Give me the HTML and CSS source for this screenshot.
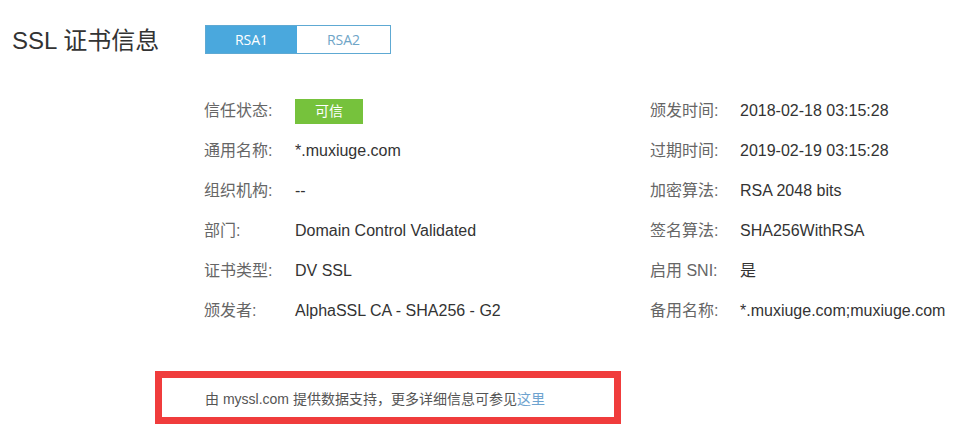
FILE: index.html
```html
<!DOCTYPE html>
<html lang="zh">
<head>
<meta charset="utf-8">
<title>SSL 证书信息</title>
<link rel="stylesheet" href="styles.css">
</head>
<body>
<div class="page">
  <div class="header">
    <h2 class="title">SSL 证书信息</h2>
    <div class="tabs">
      <span class="tab active">RSA1</span>
      <span class="tab">RSA2</span>
    </div>
  </div>
  <div class="info">
    <div class="item"><span class="label">信任状态:</span><span class="value"><span class="badge">可信</span></span></div>
    <div class="item right"><span class="label">颁发时间:</span><span class="value">2018-02-18 03:15:28</span></div>
    <div class="item"><span class="label">通用名称:</span><span class="value">*.muxiuge.com</span></div>
    <div class="item right"><span class="label">过期时间:</span><span class="value">2019-02-19 03:15:28</span></div>
    <div class="item"><span class="label">组织机构:</span><span class="value">--</span></div>
    <div class="item right"><span class="label">加密算法:</span><span class="value">RSA 2048 bits</span></div>
    <div class="item"><span class="label">部门:</span><span class="value">Domain Control Validated</span></div>
    <div class="item right"><span class="label">签名算法:</span><span class="value">SHA256WithRSA</span></div>
    <div class="item"><span class="label">证书类型:</span><span class="value">DV SSL</span></div>
    <div class="item right"><span class="label">启用 SNI:</span><span class="value">是</span></div>
    <div class="item"><span class="label">颁发者:</span><span class="value">AlphaSSL CA - SHA256 - G2</span></div>
    <div class="item right"><span class="label">备用名称:</span><span class="value">*.muxiuge.com;muxiuge.com</span></div>
  </div>
  <div class="footer">
    <p class="note">由 myssl.com 提供数据支持，更多详细信息可参见<a class="link" href="#">这里</a></p>
  </div>
</div>
</body>
</html>
```

FILE: styles.css
```css
html, body {
  margin: 0;
  padding: 0;
  background: #ffffff;
}
body {
  font-family: "Liberation Sans", Arial, "Noto Sans CJK SC", sans-serif;
  color: #333333;
}
.page {
  width: 961px;
}
.header {
  display: flex;
  align-items: center;
  padding: 25px 0 0 12px;
  height: 29px;
}
.title {
  margin: 0;
  width: 193px;
  font-size: 24px;
  font-weight: normal;
  color: #333333;
  line-height: 29px;
  position: relative;
  top: 1px;
}
.tabs {
  display: flex;
  height: 29px;
  box-sizing: border-box;
  border: 1px solid #5ea9d3;
}
.tab {
  display: flex;
  align-items: center;
  justify-content: center;
  width: 93px;
  font-family: "Open Sans", "Liberation Sans", sans-serif;
  font-size: 14px;
  color: #6fa5c7;
  background: #ffffff;
}
.tab.active {
  width: 91px;
  background: #4aa8dd;
  color: #ffffff;
}
.info {
  display: grid;
  grid-template-columns: 446px auto;
  grid-auto-rows: 40px;
  margin-top: 37px;
  padding-left: 204px;
}
.item {
  display: flex;
  align-items: center;
  font-size: 16px;
  line-height: 20px;
}
.label {
  width: 91px;
  flex-shrink: 0;
  font-size: 16px;
  color: #666666;
}
.item.right .label {
  width: 90px;
}
.value {
  color: #333333;
  white-space: nowrap;
}
.badge {
  display: inline-flex;
  align-items: center;
  justify-content: center;
  width: 68px;
  height: 25px;
  background: #76c23c;
  color: #ffffff;
  font-size: 14px;
}
.footer {
  margin: 40px 0 0 155px;
  width: 466px;
  height: 53px;
  box-sizing: border-box;
  border: 7px solid #f03c3c;
  display: flex;
  align-items: center;
  padding-left: 43px;
}
.note {
  margin: 0;
  font-size: 14px;
  color: #555555;
}
.link {
  color: #6ea3cf;
  text-decoration: none;
}
```
